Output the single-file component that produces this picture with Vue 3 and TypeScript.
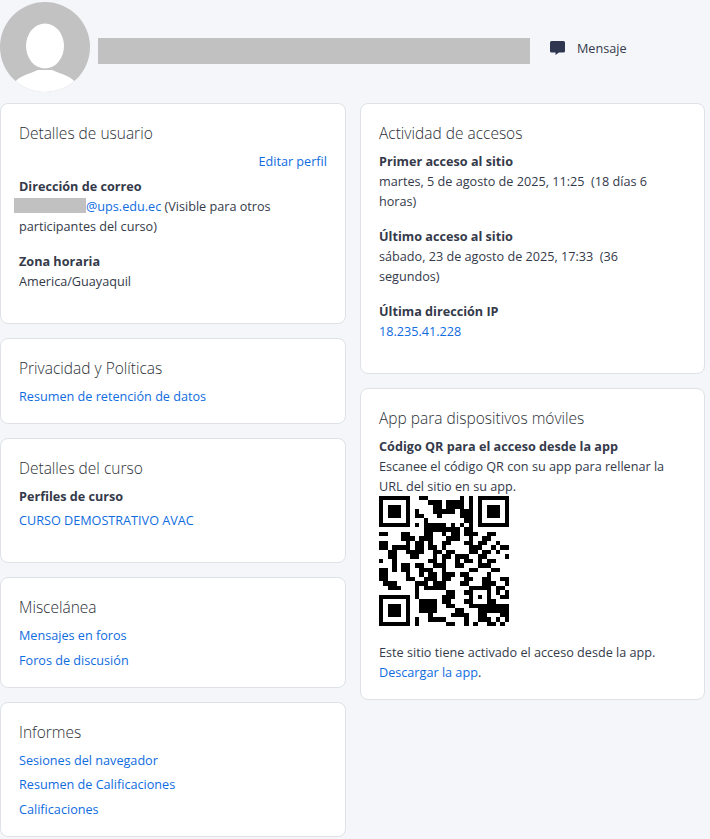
<script setup lang="ts">
const qr: string[] = [
  '11111110011000000010101111111',
  '10000010000111011110101000001',
  '10111010000011011110101011101',
  '10111010100011111011101011101',
  '10111010110001000011101011101',
  '10000010001000000001101000001',
  '11111110101111101010101111111',
  '00000000001111111101100000000',
  '11000110001100101101110011000',
  '00000111011100011100100110000',
  '11000010110100110001101100100',
  '11011110110110100000111001011',
  '00110011110011011000110110100',
  '00110001100010110111001100001',
  '10010000000110100101101011000',
  '00010110110011100110001110000',
  '11010110011100100000110001100',
  '11000010010110111011000010000',
  '11000011001110110001100110011',
  '01110000111011100011000111001',
  '00111000101111100000111110110',
  '00000000100000011001100010101',
  '11111110100000111000101010011',
  '10000010011110110001100011000',
  '10111010011110011000111111111',
  '10111010011110000110001111111',
  '10111010000100001111001100011',
  '10000010100111100001001110101',
  '11111110100000011001010011010',
]
const cells = qr.flatMap((row, y) =>
  [...row].flatMap((c, x) => (c === '1' ? [{ x, y }] : [])),
)
</script>

<template>
  <div class="page">
    <header class="head">
      <svg class="avatar" viewBox="0 0 90 90" width="90" height="90">
        <defs>
          <clipPath id="av"><circle cx="45" cy="45" r="45" /></clipPath>
        </defs>
        <circle cx="45" cy="45" r="45" fill="#c2c2c2" />
        <g clip-path="url(#av)" fill="#fff">
          <ellipse cx="45" cy="44" rx="19" ry="22.5" />
          <path d="M14 81 C18 75 28 72 38 68 L52 68 C62 72 72 75 76 81 L76 92 L14 92 Z" />
        </g>
      </svg>
      <div class="name-bar"></div>
      <div class="msg">
        <svg class="msg-ico" viewBox="0 0 15 14" width="15" height="14">
          <path fill="#2f3650" d="M1.5 0h12A1.5 1.5 0 0 1 15 1.5v8.5a1.5 1.5 0 0 1-1.5 1.5H9L5.5 14v-2.500H1.500A1.500 1.500 0 0 1 0 10V1.500A1.500 1.500 0 0 1 1.500 0z" />
        </svg>
        <span>Mensaje</span>
      </div>
    </header>

    <div class="cols">
      <div class="col">
        <section class="card pb">
          <h3>Detalles de usuario</h3>
          <div class="edit"><a>Editar perfil</a></div>
          <dl>
            <dt>Dirección de correo</dt>
            <dd><span class="redact"></span><a>@ups.edu.ec</a> (Visible para otros participantes del curso)</dd>
          </dl>
          <dl>
            <dt>Zona horaria</dt>
            <dd>America/Guayaquil</dd>
          </dl>
        </section>
        <section class="card">
          <h3>Privacidad y Políticas</h3>
          <a class="link">Resumen de retención de datos</a>
        </section>
        <section class="card pb">
          <h3>Detalles del curso</h3>
          <dl class="course">
            <dt>Perfiles de curso</dt>
            <dd><a>CURSO DEMOSTRATIVO AVAC</a></dd>
          </dl>
        </section>
        <section class="card">
          <h3>Miscelánea</h3>
          <ul>
            <li><a>Mensajes en foros</a></li>
            <li><a>Foros de discusión</a></li>
          </ul>
        </section>
        <section class="card">
          <h3>Informes</h3>
          <ul>
            <li><a>Sesiones del navegador</a></li>
            <li><a>Resumen de Calificaciones</a></li>
            <li><a>Calificaciones</a></li>
          </ul>
        </section>
      </div>

      <div class="col">
        <section class="card pb">
          <h3>Actividad de accesos</h3>
          <dl>
            <dt>Primer acceso al sitio</dt>
            <dd>martes, 5 de agosto de 2025, 11:25&nbsp; (18 días 6 horas)</dd>
          </dl>
          <dl>
            <dt>Último acceso al sitio</dt>
            <dd>sábado, 23 de agosto de 2025, 17:33&nbsp; (36<br />segundos)</dd>
          </dl>
          <dl>
            <dt>Última dirección IP</dt>
            <dd><a>18.235.41.228</a></dd>
          </dl>
        </section>
        <section class="card">
          <h3>App para dispositivos móviles</h3>
          <dl class="app">
            <dt>Código QR para el acceso desde la app</dt>
            <dd>Escanee el código QR con su app para rellenar la URL del sitio en su app.</dd>
          </dl>
          <svg class="qr" viewBox="0 0 29 29" width="130" height="130" shape-rendering="crispEdges">
            <rect v-for="c in cells" :key="c.x + '-' + c.y" :x="c.x" :y="c.y" width="1" height="1" fill="#000" />
          </svg>
          <p>Este sitio tiene activado el acceso desde la app. <a>Descargar la app</a>.</p>
        </section>
      </div>
    </div>
  </div>
</template>

<style scoped>
.page {
  font-family: "Open Sans", "Noto Sans", sans-serif;
  font-size: 12.65px;
  line-height: 20px;
  color: #343a4a;
  width: 710px;
}
.head {
  display: flex;
  align-items: center;
  height: 103px;
}
.avatar { margin-top: -9px; flex: none; }
.name-bar {
  width: 432px;
  height: 26px;
  margin: -1px 0 0 8px;
  background: #c1c1c1;
}
.msg {
  display: flex;
  align-items: center;
  margin-left: 20px;
  margin-top: -7px;
  gap: 12px;
}
.msg-ico { flex: none; }
.cols {
  display: grid;
  grid-template-columns: 346px 345px;
  column-gap: 14px;
  align-items: start;
}
.col {
  display: flex;
  flex-direction: column;
  gap: 14px;
}
.card {
  background: #fff;
  border: 1px solid #dee2e6;
  border-radius: 8px;
  padding: 19px 18px 17px;
}
.card.pb { padding-bottom: 32px; }
h3 {
  margin: 0 0 7px;
  font-size: 15.5px;
  line-height: 21px;
  font-weight: 300;
  color: #2b2f36;
}
dl { margin: 0 0 15px; }
dl:last-child { margin-bottom: 0; }
.app { margin-bottom: 0; }
dt { font-weight: 700; }
dd { margin: 0; }
a { color: #0f6cdf; }
.link { display: block; }
.edit {
  text-align: right;
  margin-bottom: 5px;
}
.redact {
  display: inline-block;
  width: 72px;
  height: 15px;
  margin-left: -5px;
  background: #c1c1c1;
  vertical-align: -2px;
}
.course dt { margin-bottom: 4px; }
ul {
  list-style: none;
  margin: 0;
  padding: 0;
  display: flex;
  flex-direction: column;
  gap: 4.7px;
}
.qr {
  display: block;
  margin: 0 0 16px;
}
p { margin: 0; }
</style>

<style>
html, body { background: #f5f6fa; }
</style>
